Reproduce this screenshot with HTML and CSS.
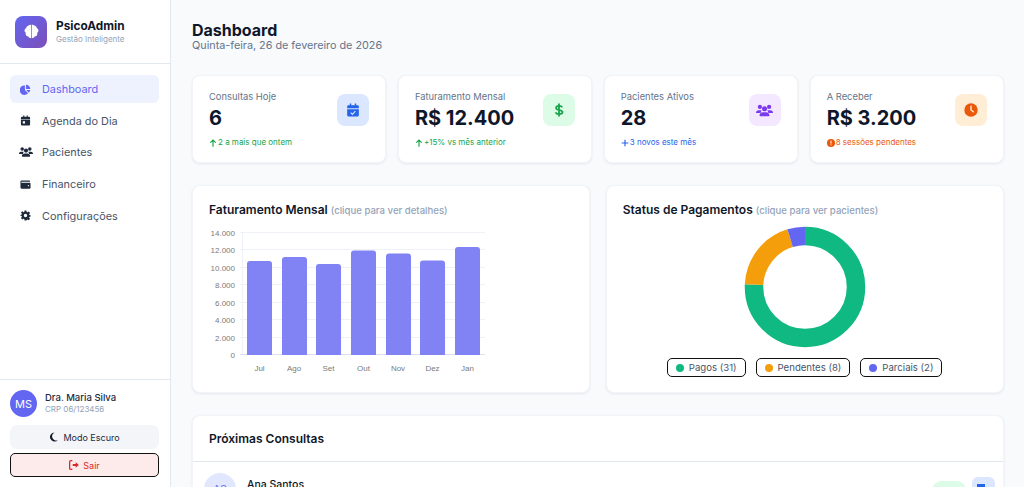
FILE: index.html
```html
<!DOCTYPE html>
<html lang="pt-BR">
<head>
    <meta charset="UTF-8">
    <meta name="viewport" content="width=device-width, initial-scale=1.0">
    <title>PsicoAdmin - Dashboard</title>
    <link rel="stylesheet" href="styles.css">
</head>
<body>
    <div class="app">
        <aside class="sidebar">
            <div class="brand">
                <div class="brand-logo">
                    <svg viewBox="0 0 24 24" width="17" height="17"><path fill="#fff" d="M11.5 2.5v19c-1.7 0-3.5-1-4-2.4C5.5 19 3.8 17.5 3.8 15.5c0-.6.1-1.1.4-1.6C3 13.2 2.2 12 2.2 10.5c0-1.6 1-3 2.4-3.5C4.7 5.1 6 3.8 7.6 3.8c.5-.8 2.3-1.3 3.9-1.3zM12.5 2.5c1.6 0 3.4.5 3.9 1.3 1.6 0 2.9 1.3 3 3.2 1.4.5 2.4 1.9 2.4 3.5 0 1.5-.8 2.7-2 3.4.3.5.4 1 .4 1.6 0 2-1.7 3.5-3.7 3.6-.5 1.4-2.3 2.4-4 2.4z"/></svg>
                </div>
                <div>
                    <div class="brand-name">PsicoAdmin</div>
                    <div class="brand-sub">Gestão Inteligente</div>
                </div>
            </div>

            <nav class="nav">
                <a class="nav-item active" href="#">
                    <svg class="nav-icon" viewBox="0 0 24 24"><path d="M13 1.5a9.5 9.5 0 0 1 9.5 9.5H13zM10.8 3.3v9.900l6.800 6.900A10.300 10.300 0 1 1 10.800 3.300zM13.500 13.200h9a10 10 0 0 1-3.300 5.800z"/></svg>
                    Dashboard
                </a>
                <a class="nav-item" href="#">
                    <svg class="nav-icon" viewBox="0 0 24 24"><path d="M7 1h2.500v3h5V1H17v3h2.500A2.500 2.500 0 0 1 22 6.500V9H2V6.500A2.500 2.500 0 0 1 4.500 4H7zM2 10.500h20v10a2.500 2.500 0 0 1-2.500 2.500h-15A2.500 2.500 0 0 1 2 20.500zM6 13.500v5h5v-5z"/></svg>
                    Agenda do Dia
                </a>
                <a class="nav-item" href="#">
                    <svg class="nav-icon nav-icon-wide" viewBox="0 0 24 24"><circle cx="5.5" cy="7" r="3"/><circle cx="18.5" cy="7" r="3"/><circle cx="12" cy="9.5" r="3.6"/><path d="M0 15c0-2 1.500-3.500 3.500-3.500h3c.6 0 1 .1 1.500.3-.8 1-1.300 2.300-1.300 3.700H.8c-.5 0-.8-.2-.8-.5zM24 15c0 .3-.3.5-.8.5h-5.900c0-1.400-.5-2.700-1.300-3.700.5-.2.900-.3 1.500-.3h3c2 0 3.500 1.500 3.500 3.500zM9.500 14.500h5c2.500 0 4.500 2 4.500 4.500 0 .6-.4 1-1 1H6c-.6 0-1-.4-1-1 0-2.500 2-4.500 4.500-4.500z"/></svg>
                    Pacientes
                </a>
                <a class="nav-item" href="#">
                    <svg class="nav-icon" viewBox="0 0 24 24"><path d="M3.500 3h17A1.500 1.500 0 0 1 22 4.500V6H3.500a1 1 0 0 0 0 2H21a2 2 0 0 1 2 2v9a2.500 2.500 0 0 1-2.500 2h-17A2.500 2.500 0 0 1 1 18.500v-13A2.500 2.500 0 0 1 3.500 3zM18.500 13a1.500 1.500 0 1 0 0 3 1.500 1.500 0 0 0 0-3z"/></svg>
                    Financeiro
                </a>
                <a class="nav-item" href="#">
                    <svg class="nav-icon" viewBox="0 0 24 24"><path fill-rule="evenodd" d="M10 1h4l.7 3.200 1.700.8 2.900-1.500 2.600 3-2 2.500.5 1.800 3 1.200v1.800l-3 1.200-.5 1.800 2 2.500-2.600 3-2.900-1.500-1.700.8L14 23h-4l-.7-3.200-1.700-.8-2.900 1.500-2.600-3 2-2.500-.5-1.800-3-1.200V11l3-1.200.5-1.800-2-2.500 2.600-3L7.600 5l1.700-.8zM12 8.300a3.700 3.700 0 1 0 0 7.400 3.700 3.700 0 0 0 0-7.400z"/></svg>
                    Configurações
                </a>
            </nav>

            <div class="sidebar-footer">
                <div class="user">
                    <div class="user-avatar">MS</div>
                    <div>
                        <div class="user-name">Dra. Maria Silva</div>
                        <div class="user-crp">CRP 06/123456</div>
                    </div>
                </div>
                <button class="btn-theme">
                    <svg viewBox="0 0 24 24" width="10" height="10"><path fill="#0f172a" d="M13.5 1A11 11 0 1 0 21.5 19.5 9.5 9.5 0 0 1 13.5 1z"/></svg>
                    Modo Escuro
                </button>
                <button class="btn-logout">
                    <svg viewBox="0 0 24 24" width="10" height="10"><path fill="#dc2626" d="M16 5.5 23.5 12 16 18.500V14.500H9v-5h7zM8 3H4.500A1.500 1.500 0 0 0 3 4.500v15A1.500 1.500 0 0 0 4.500 21H8v3H4.500A4.500 4.500 0 0 1 0 19.500v-15A4.500 4.500 0 0 1 4.500 0H8z"/></svg>
                    Sair
                </button>
            </div>
        </aside>

        <main class="main">
            <header class="page-head">
                <h1>Dashboard</h1>
                <p>Quinta-feira, 26 de fevereiro de 2026</p>
            </header>

            <section class="stats">
                <div class="stat-card">
                    <div class="stat-top">
                        <div>
                            <div class="stat-label">Consultas Hoje</div>
                            <div class="stat-value">6</div>
                        </div>
                        <div class="stat-icon tile-blue">
                            <svg viewBox="0 0 24 24" width="14" height="14"><path fill="#2563eb" d="M6.500 1h2.500v3h6V1h2.500v3H20a2 2 0 0 1 2 2v3H2V6a2 2 0 0 1 2-2h2.500zM2 10.500h20V21a2 2 0 0 1-2 2H4a2 2 0 0 1-2-2z"/><path fill="none" stroke="#dbe7fe" stroke-width="2" d="M8 16.500l3 3 5-5.500"/></svg>
                        </div>
                    </div>
                    <div class="stat-note note-green">
                        <svg viewBox="0 0 24 24" width="8" height="8"><path fill="none" stroke="currentColor" stroke-width="3.5" d="M12 23V3M4 11l8-8 8 8"/></svg>
                        2 a mais que ontem
                    </div>
                </div>
                <div class="stat-card">
                    <div class="stat-top">
                        <div>
                            <div class="stat-label">Faturamento Mensal</div>
                            <div class="stat-value">R$ 12.400</div>
                        </div>
                        <div class="stat-icon tile-green">
                            <svg viewBox="0 0 24 24" width="14" height="14"><path fill="none" stroke="#16a34a" stroke-width="3" d="M17.500 7.500C16.500 5.500 14.500 5 12 5 9 5 7 6.300 7 8.500c0 5 11 2.200 11 7.300C18 18 15.500 19 12 19c-2.800 0-5-.9-6-3M12 1v22"/></svg>
                        </div>
                    </div>
                    <div class="stat-note note-green">
                        <svg viewBox="0 0 24 24" width="8" height="8"><path fill="none" stroke="currentColor" stroke-width="3.5" d="M12 23V3M4 11l8-8 8 8"/></svg>
                        +15% vs mês anterior
                    </div>
                </div>
                <div class="stat-card">
                    <div class="stat-top">
                        <div>
                            <div class="stat-label">Pacientes Ativos</div>
                            <div class="stat-value">28</div>
                        </div>
                        <div class="stat-icon tile-purple">
                            <svg viewBox="0 0 24 24" width="17" height="17"><g fill="#7c3aed"><circle cx="5.5" cy="7" r="3"/><circle cx="18.5" cy="7" r="3"/><circle cx="12" cy="9.5" r="3.6"/><path d="M0 15c0-2 1.500-3.500 3.500-3.500h3c.6 0 1 .1 1.500.3-.8 1-1.300 2.300-1.300 3.700H.8c-.5 0-.8-.2-.8-.5zM24 15c0 .3-.3.5-.8.5h-5.900c0-1.400-.5-2.700-1.300-3.700.5-.2.900-.3 1.500-.3h3c2 0 3.500 1.500 3.500 3.500zM9.500 14.500h5c2.500 0 4.500 2 4.500 4.500 0 .6-.4 1-1 1H6c-.6 0-1-.4-1-1 0-2.500 2-4.500 4.500-4.500z"/></g></svg>
                        </div>
                    </div>
                    <div class="stat-note note-blue">
                        <svg viewBox="0 0 24 24" width="8" height="8"><path fill="none" stroke="currentColor" stroke-width="3.5" d="M12 2v20M2 12h20"/></svg>
                        3 novos este mês
                    </div>
                </div>
                <div class="stat-card">
                    <div class="stat-top">
                        <div>
                            <div class="stat-label">A Receber</div>
                            <div class="stat-value">R$ 3.200</div>
                        </div>
                        <div class="stat-icon tile-orange">
                            <svg viewBox="0 0 24 24" width="14" height="14"><circle cx="12" cy="12" r="11.5" fill="#ea580c"/><path fill="none" stroke="#ffedd5" stroke-width="2.4" stroke-linecap="round" d="M12 5.500V12l4 3"/></svg>
                        </div>
                    </div>
                    <div class="stat-note note-orange">
                        <svg viewBox="0 0 24 24" width="8" height="8"><circle cx="12" cy="12" r="12" fill="currentColor"/><path fill="none" stroke="#fff" stroke-width="3" d="M12 5v9M12 16v3"/></svg>
                        8 sessões pendentes
                    </div>
                </div>
            </section>

            <section class="charts">
                <div class="card chart-card">
                    <h2>Faturamento Mensal <small>(clique para ver detalhes)</small></h2>
                    <svg class="bar-chart" viewBox="0 0 290 152" width="290" height="152">
                        <g class="grid">
                            <line x1="33" x2="278" y1="5.5" y2="5.5"/>
                            <line x1="33" x2="278" y1="22.5" y2="22.5"/>
                            <line x1="33" x2="278" y1="40.5" y2="40.5"/>
                            <line x1="33" x2="278" y1="57.5" y2="57.5"/>
                            <line x1="33" x2="278" y1="75.5" y2="75.5"/>
                            <line x1="33" x2="278" y1="92.5" y2="92.5"/>
                            <line x1="33" x2="278" y1="110.5" y2="110.5"/>
                            <line x1="35.5" x2="35.5" y1="5" y2="128"/>
                        </g>
                        <line class="axis" x1="33" x2="278" y1="127.5" y2="127.5"/>
                        <g class="bars">
                            <path d="M40 128V37a3 3 0 0 1 3-3h19a3 3 0 0 1 3 3v91z"/>
                            <path d="M75 128V33a3 3 0 0 1 3-3h19a3 3 0 0 1 3 3v95z"/>
                            <path d="M109 128V40a3 3 0 0 1 3-3h19a3 3 0 0 1 3 3v88z"/>
                            <path d="M144 128V26.5a3 3 0 0 1 3-3h19a3 3 0 0 1 3 3V128z"/>
                            <path d="M179 128V29.5a3 3 0 0 1 3-3h19a3 3 0 0 1 3 3V128z"/>
                            <path d="M213 128V36.5a3 3 0 0 1 3-3h19a3 3 0 0 1 3 3V128z"/>
                            <path d="M248 128V23a3 3 0 0 1 3-3h19a3 3 0 0 1 3 3v105z"/>
                        </g>
                        <g class="y-labels">
                            <text x="28" y="8.5">14.000</text>
                            <text x="28" y="26">12.000</text>
                            <text x="28" y="43.5">10.000</text>
                            <text x="28" y="61">8.000</text>
                            <text x="28" y="78.5">6.000</text>
                            <text x="28" y="96">4.000</text>
                            <text x="28" y="113.5">2.000</text>
                            <text x="28" y="131">0</text>
                        </g>
                        <g class="x-labels">
                            <text x="52.5" y="144">Jul</text>
                            <text x="87" y="144">Ago</text>
                            <text x="121.5" y="144">Set</text>
                            <text x="156.5" y="144">Out</text>
                            <text x="191" y="144">Nov</text>
                            <text x="225.5" y="144">Dez</text>
                            <text x="260.5" y="144">Jan</text>
                        </g>
                    </svg>
                </div>

                <div class="card chart-card">
                    <h2>Status de Pagamentos <small>(clique para ver pacientes)</small></h2>
                    <svg class="donut" viewBox="0 0 122 122" width="122" height="122">
                        <g fill="none" stroke-width="18.5" transform="rotate(-90 61 61)">
                            <circle cx="61" cy="61" r="51" stroke="#10b981" stroke-dasharray="242.3 320.4"/>
                            <circle cx="61" cy="61" r="51" stroke="#f59e0b" stroke-dasharray="62.5 320.4" stroke-dashoffset="-242.3"/>
                            <circle cx="61" cy="61" r="51" stroke="#6366f1" stroke-dasharray="15.6 320.4" stroke-dashoffset="-304.8"/>
                        </g>
                    </svg>
                    <div class="legend">
                        <button class="legend-item"><span class="dot dot-green"></span>Pagos (31)</button>
                        <button class="legend-item"><span class="dot dot-amber"></span>Pendentes (8)</button>
                        <button class="legend-item"><span class="dot dot-indigo"></span>Parciais (2)</button>
                    </div>
                </div>
            </section>

            <section class="card appointments">
                <h2 class="appointments-title">Próximas Consultas</h2>
                <div class="appointment">
                    <div class="appointment-avatar">AS</div>
                    <div class="appointment-name">Ana Santos</div>
                    <div class="appointment-status"></div>
                    <div class="appointment-action"><span class="appointment-action-icon"></span></div>
                </div>
            </section>
        </main>
    </div>
</body>
</html>
```

FILE: styles.css
```css
* {
    margin: 0;
    padding: 0;
    box-sizing: border-box;
}

html, body {
    height: 100%;
    overflow: hidden;
}

body {
    font-family: Inter, "Noto Sans", sans-serif;
    background: #f8fafc;
    color: #0f172a;
}

.app {
    display: flex;
    height: 100vh;
}

/* sidebar */
.sidebar {
    width: 171px;
    flex-shrink: 0;
    display: flex;
    flex-direction: column;
    background: #fff;
    border-right: 1px solid #e2e8f0;
}

.brand {
    height: 64px;
    display: flex;
    align-items: center;
    gap: 9px;
    padding: 0 15px;
    border-bottom: 1px solid #e2e8f0;
}

.brand-logo {
    width: 32px;
    height: 32px;
    border-radius: 8px;
    display: flex;
    align-items: center;
    justify-content: center;
    background: linear-gradient(135deg, #6366f1, #7c4fb8);
}

.brand-name {
    font-size: 11.8px;
    font-weight: 700;
    line-height: 15px;
}

.brand-sub {
    font-size: 8px;
    color: #94a3b8;
    line-height: 10px;
}

.nav {
    display: flex;
    flex-direction: column;
    gap: 3.7px;
    padding: 11px 11px 0 10px;
}

.nav-item {
    height: 28px;
    display: flex;
    align-items: center;
    gap: 11px;
    padding: 0 10px;
    border-radius: 6px;
    font-size: 10.9px;
    color: #475569;
    text-decoration: none;
}

.nav-item.active {
    background: #eef2ff;
    color: #6366f1;
}

.nav-icon {
    width: 11px;
    height: 11px;
    fill: #1e293b;
    flex-shrink: 0;
}

.nav-icon-wide {
    width: 14px;
    height: 14px;
    margin: 0 -1.5px;
}

.nav-item.active .nav-icon {
    fill: #6366f1;
}

.sidebar-footer {
    margin-top: auto;
    padding: 10px 11px 10px 10px;
    border-top: 1px solid #e2e8f0;
}

.user {
    display: flex;
    align-items: center;
    gap: 8px;
    margin-bottom: 8px;
}

.user-avatar {
    width: 27px;
    height: 27px;
    border-radius: 50%;
    display: flex;
    align-items: center;
    justify-content: center;
    background: #6366f1;
    color: #fff;
    font-size: 11px;
}

.user-name {
    font-size: 9.5px;
    font-weight: 500;
    line-height: 12px;
    color: #1e293b;
}

.user-crp {
    font-size: 8px;
    line-height: 11px;
    color: #94a3b8;
}

.btn-theme, .btn-logout {
    width: 100%;
    height: 24px;
    display: flex;
    align-items: center;
    justify-content: center;
    gap: 4px;
    font-family: inherit;
    font-size: 9px;
    cursor: pointer;
}

.btn-theme {
    background: #f3f5f8;
    border: none;
    border-radius: 7px;
    color: #1e293b;
    margin-bottom: 4px;
}

.btn-logout {
    background: #fdeaea;
    border: 1px solid #111;
    border-radius: 5px;
    color: #dc2626;
}

/* main */
.main {
    flex: 1;
    min-width: 0;
    padding: 21px 20.5px 0 21px;
}

.page-head {
    margin-bottom: 23px;
}

.page-head h1 {
    font-size: 16px;
    font-weight: 700;
    line-height: 18px;
}

.page-head p {
    font-size: 10.8px;
    line-height: 13px;
    color: #64748b;
}

.stats {
    display: grid;
    grid-template-columns: repeat(4, 1fr);
    gap: 12px;
    margin-bottom: 22px;
}

.stat-card, .card {
    background: #fff;
    border: 1px solid #f1f5f9;
    border-radius: 8px;
    box-shadow: 0 1px 3px rgba(15, 23, 42, 0.08);
}

.stat-card {
    height: 88px;
    padding: 15px 16px;
}

.stat-top {
    display: flex;
    justify-content: space-between;
    align-items: flex-start;
    height: 41px;
}

.stat-label {
    font-size: 9.4px;
    line-height: 12px;
    color: #64748b;
}

.stat-value {
    font-size: 20px;
    font-weight: 700;
    line-height: 26px;
    margin-top: 2px;
}

.stat-icon {
    width: 32px;
    height: 32px;
    border-radius: 8px;
    display: flex;
    align-items: center;
    justify-content: center;
    margin-top: 3px;
}

.tile-blue { background: #dbe7fe; }
.tile-green { background: #dcfce7; }
.tile-purple { background: #f3e8ff; }
.tile-orange { background: #ffedd5; }

.stat-note {
    display: flex;
    align-items: center;
    gap: 1px;
    margin-top: 5px;
    font-size: 8px;
    line-height: 11px;
}

.note-green { color: #16a34a; }
.note-blue { color: #2563eb; }
.note-orange { color: #ea580c; }

.charts {
    display: grid;
    grid-template-columns: 1fr 1fr;
    gap: 16px;
    margin-bottom: 22px;
}

.chart-card {
    height: 208px;
    padding: 16px;
}

.chart-card h2 {
    font-size: 12px;
    font-weight: 600;
    line-height: 16px;
}

.chart-card h2 small {
    font-size: 9.6px;
    font-weight: 500;
    color: #94a3b8;
}

.bar-chart {
    display: block;
    margin: 8px 0 0 -2px;
}

.grid line {
    stroke: #eef1f6;
    stroke-width: 1;
}

.axis {
    stroke: #dbe1ea;
    stroke-width: 1;
}

.bars path {
    fill: #8183f4;
}

.y-labels text, .x-labels text {
    font-family: "Liberation Sans", sans-serif;
    font-size: 8px;
    fill: #7a7a7a;
}

.y-labels text {
    text-anchor: end;
}

.x-labels text {
    text-anchor: middle;
}

.donut {
    display: block;
    margin: 7px auto 0;
}

.legend {
    display: flex;
    justify-content: center;
    gap: 10px;
    margin-top: 10px;
}

.legend-item {
    height: 19px;
    display: flex;
    align-items: center;
    gap: 5px;
    padding: 0 8px;
    background: #fff;
    border: 1px solid #111;
    border-radius: 5px;
    font-family: inherit;
    font-size: 9.6px;
    color: #475569;
}

.dot {
    width: 8px;
    height: 8px;
    border-radius: 50%;
}

.dot-green { background: #10b981; }
.dot-amber { background: #f59e0b; }
.dot-indigo { background: #6366f1; }

.appointments-title {
    height: 46px;
    display: flex;
    align-items: center;
    padding: 0 16px;
    font-size: 12px;
    font-weight: 600;
    border-bottom: 1px solid #e2e8f0;
}

.appointment {
    display: flex;
    align-items: flex-start;
    padding: 11px 8px 11px 11px;
}

.appointment-avatar {
    width: 32px;
    height: 32px;
    border-radius: 50%;
    display: flex;
    align-items: center;
    justify-content: center;
    background: #e0e7ff;
    color: #6366f1;
    font-size: 10px;
}

.appointment-name {
    margin: 5px 0 0 11px;
    font-size: 10.5px;
    font-weight: 500;
}

.appointment-status {
    width: 34px;
    height: 18px;
    margin: 8px 0 0 auto;
    border-radius: 9px;
    background: #dcfce7;
}

.appointment-action {
    width: 23px;
    height: 24px;
    margin: 4px 0 0 6px;
    padding: 7px 0 0 5px;
    border-radius: 6px;
    background: #dbe7fe;
}

.appointment-action-icon {
    display: block;
    width: 8px;
    height: 8px;
    background: #2563eb;
}
```
